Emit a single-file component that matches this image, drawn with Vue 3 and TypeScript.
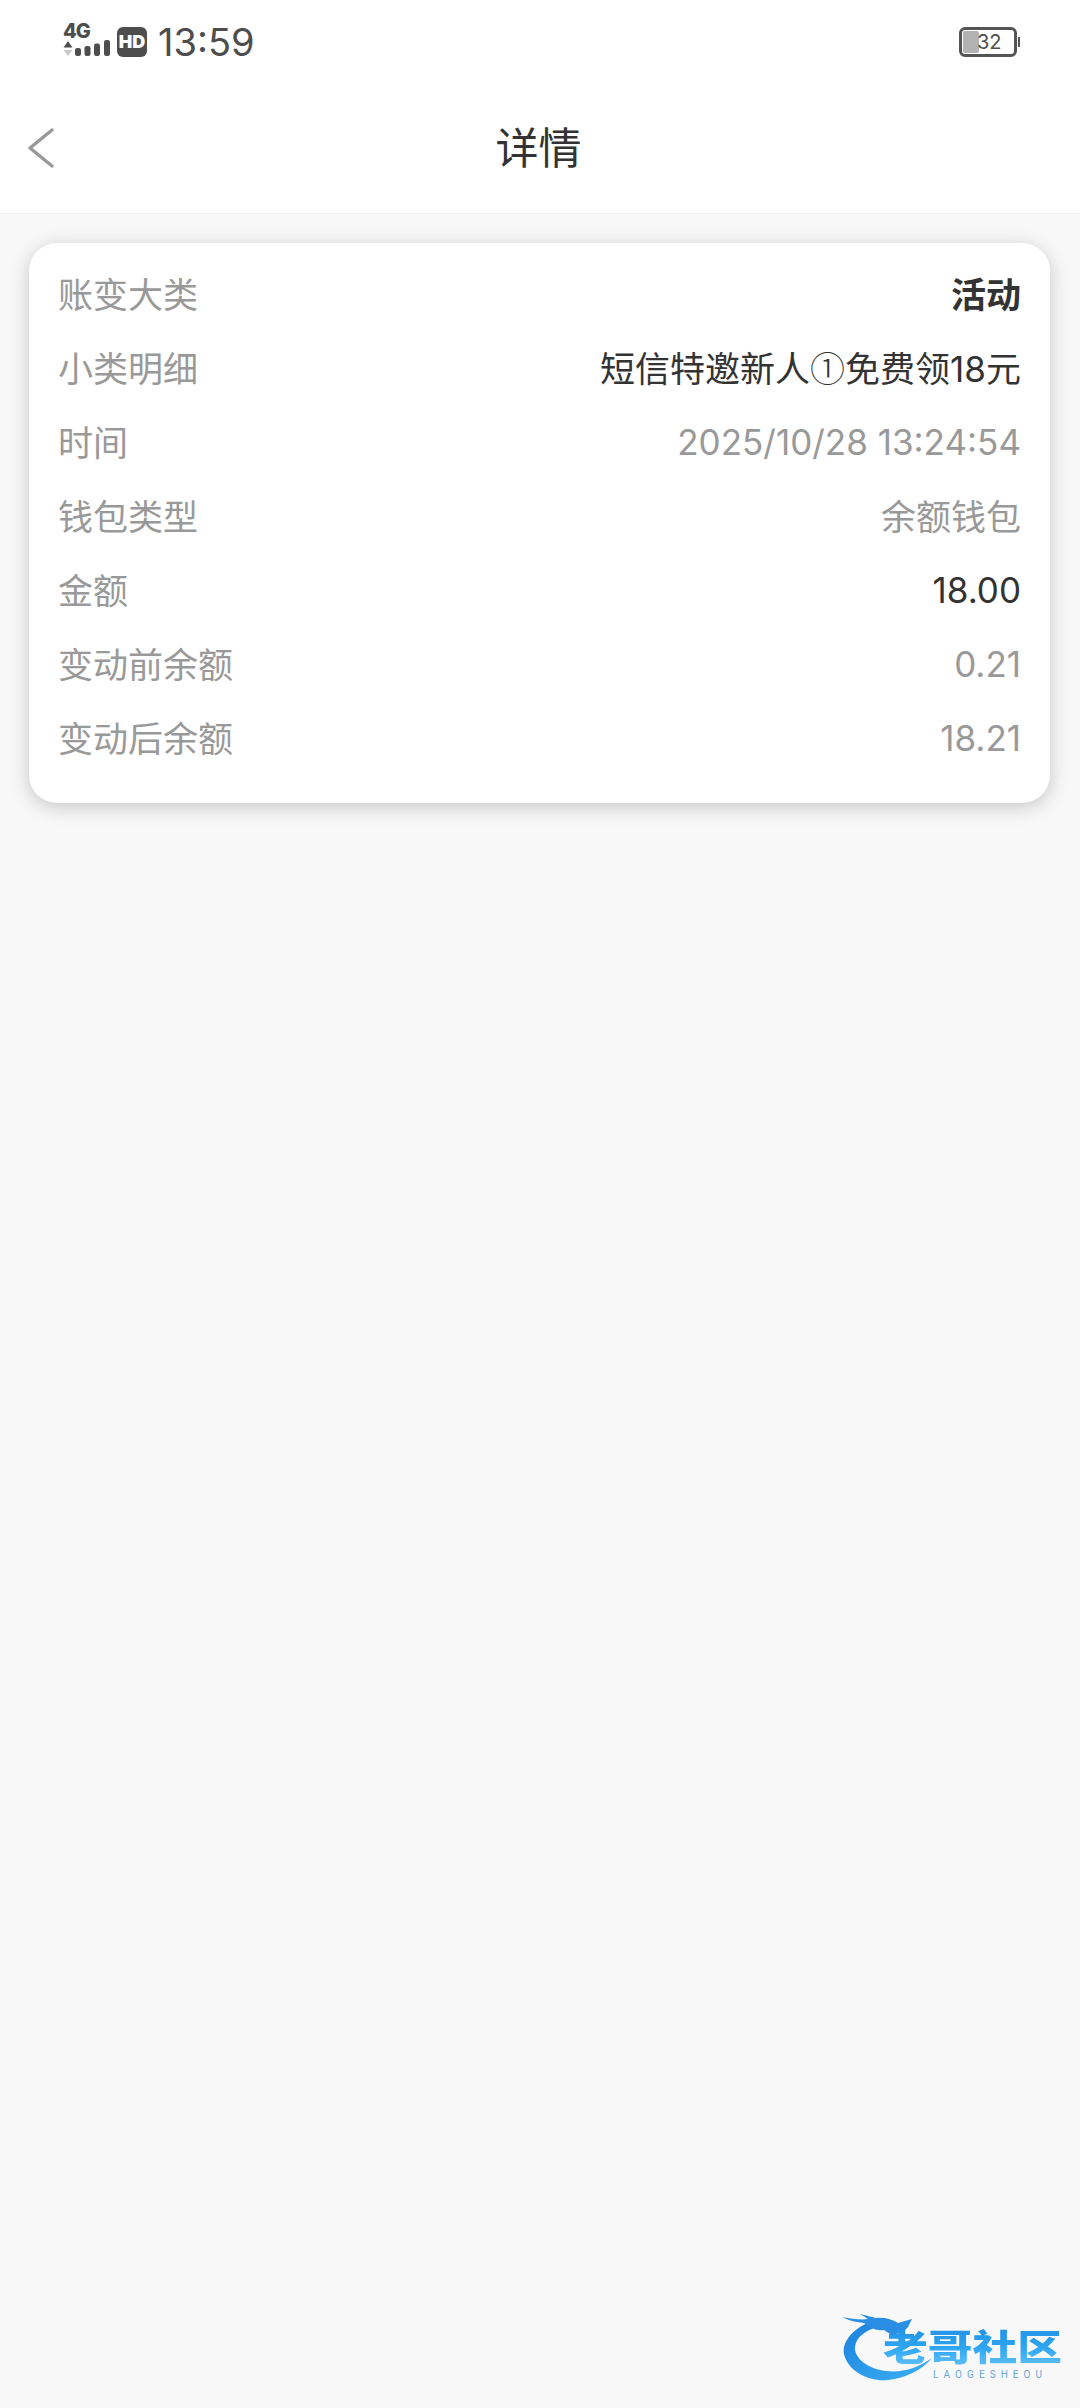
<template>
  <div class="page">
    <!-- status bar -->
    <div class="status-bar">
      <div class="status-left">
        <div class="net">
          <span class="net-label">4G</span>
          <div class="net-row">
            <svg class="arrows" width="10" height="16" viewBox="0 0 10 16">
              <path d="M5 0 L9.5 6.5 L0.5 6.5 Z" fill="#4d4d4d" />
              <path d="M5 15 L9.5 9 L0.5 9 Z" fill="#c8c8c8" />
            </svg>
            <svg class="bars" width="36" height="17" viewBox="0 0 36 17">
              <rect x="0" y="8" width="6" height="8" rx="2.2" fill="#4d4d4d" />
              <rect x="9.5" y="6" width="6" height="10" rx="2.2" fill="#4d4d4d" />
              <rect x="19" y="3.5" width="6" height="12.5" rx="2.2" fill="#4d4d4d" />
              <rect x="29" y="0" width="6" height="16" rx="2.2" fill="#4d4d4d" />
            </svg>
          </div>
        </div>
        <span class="hd">HD</span>
        <span class="time">13:59</span>
      </div>
      <div class="battery">
        <div class="battery-body">
          <div class="battery-fill" :style="{ width: battery + '%' }"></div>
          <span class="battery-num">{{ battery }}</span>
        </div>
        <div class="battery-tip"></div>
      </div>
    </div>

    <!-- title bar -->
    <div class="nav">
      <svg class="back" width="28" height="40" viewBox="0 0 28 40">
        <path d="M25 2 L3 20 L25 38" fill="none" stroke="#999" stroke-width="3.4" stroke-linecap="round" stroke-linejoin="round" />
      </svg>
      <span class="nav-title">详情</span>
    </div>

    <!-- detail card -->
    <div class="card">
      <div class="row" v-for="row in rows" :key="row.label">
        <span class="label">{{ row.label }}</span>
        <span class="value" :class="row.kind">
          <template v-if="row.circled">{{ row.value }}<span class="circled">①</span>{{ row.circled }}</template>
          <template v-else>{{ row.value }}</template>
        </span>
      </div>
    </div>

    <!-- watermark -->
    <svg class="logo" width="226" height="76" viewBox="0 0 226 76">
      <defs>
        <linearGradient id="logoText" x1="0" y1="0" x2="0" y2="1">
          <stop offset="0" stop-color="#1e88e0" />
          <stop offset="0.55" stop-color="#2ea6f2" />
          <stop offset="1" stop-color="#6cc6fa" />
        </linearGradient>
        <linearGradient id="logoDragon" x1="0" y1="0" x2="1" y2="1">
          <stop offset="0" stop-color="#1a7fdc" />
          <stop offset="1" stop-color="#3db2f6" />
        </linearGradient>
        <filter id="soft"><feGaussianBlur stdDeviation="0.7" /></filter>
      </defs>
      <g filter="url(#soft)">
        <path d="M30 12 C10 20 2 34 4 44 C8 62 30 72 48 70 C66 68 82 60 92 48 C78 58 62 63 46 61 C28 59 14 48 15 37 C16 27 26 20 38 17 Z" fill="url(#logoDragon)" />
        <path d="M2 7 C12 9 22 10 28 9 L20 4 L36 8 C44 7 52 9 58 13 L72 9 L68 17 C64 22 58 25 50 24 L44 20 C36 21 30 18 24 13 C14 12 8 10 2 7 Z" fill="#2a8fe4" />
      </g>
      <g filter="url(#soft)">
        <text class="logo-cn" x="43" y="51" fill="url(#logoText)" textLength="179" lengthAdjust="spacingAndGlyphs">老哥社区</text>
      </g>
      <text class="logo-en" x="93" y="68" textLength="109" lengthAdjust="spacing">LAOGESHEOU</text>
    </svg>
  </div>
</template>

<script setup lang="ts">
type Row = {
  label: string
  value: string
  // text after the circled number, only the sub-type row has one
  circled?: string
  kind: 'bold' | 'dark' | 'muted' | 'num' | 'num-dark'
}

const battery = 32

const rows: Row[] = [
  { label: '账变大类', value: '活动', kind: 'bold' },
  { label: '小类明细', value: '短信特邀新人', circled: '免费领18元', kind: 'dark' },
  { label: '时间', value: '2025/10/28 13:24:54', kind: 'num' },
  { label: '钱包类型', value: '余额钱包', kind: 'muted' },
  { label: '金额', value: '18.00', kind: 'num-dark' },
  { label: '变动前余额', value: '0.21', kind: 'num' },
  { label: '变动后余额', value: '18.21', kind: 'num' },
]
</script>

<style>
html, body {
  margin: 0;
  background: #f8f8f8;
}
</style>

<style scoped>
.page {
  position: relative;
  width: 1080px;
  height: 2408px;
  background: #f8f8f8;
  overflow: hidden;
  font-family: Inter, "Noto Sans CJK SC", sans-serif;
}

.status-bar {
  height: 84px;
  padding: 0 60px 0 63px;
  background: #fff;
  display: flex;
  justify-content: space-between;
  align-items: center;
  color: #4d4d4d;
}

.status-left {
  display: flex;
  align-items: center;
}

.net {
  width: 48px;
  display: flex;
  flex-direction: column;
}

.net-label {
  font-size: 20px;
  line-height: 17px;
  font-weight: 800;
  letter-spacing: -1px;
  margin-top: -4px;
}

.net-row {
  display: flex;
  align-items: flex-end;
  gap: 2px;
}

.hd {
  width: 30px;
  height: 30px;
  margin-left: 6px;
  border-radius: 6px;
  background: #4d4d4d;
  color: #fff;
  font-size: 18px;
  font-weight: 900;
  line-height: 30px;
  text-align: center;
}

.time {
  margin-left: 11px;
  font-size: 38px;
  line-height: 44px;
}

.battery {
  display: flex;
  align-items: center;
  gap: 1px;
}

.battery-body {
  position: relative;
  box-sizing: border-box;
  width: 58px;
  height: 30px;
  border: 3px solid #555;
  border-radius: 6px;
  background: #fff;
  padding: 1px;
}

.battery-fill {
  height: 100%;
  background: #b3b3b3;
  border-radius: 2px;
}

.battery-num {
  position: absolute;
  left: 15px;
  top: 0;
  font-size: 20px;
  line-height: 24px;
  color: #4d4d4d;
}

.battery-tip {
  width: 2px;
  height: 10px;
  background: #555;
}

.nav {
  position: relative;
  height: 129px;
  background: #fff;
  border-bottom: 1px solid #f0f0f0;
  display: flex;
  align-items: center;
  justify-content: center;
}

.back {
  position: absolute;
  left: 27px;
  top: 44px;
}

.nav-title {
  font-size: 43px;
  color: #333;
  line-height: 60px;
  margin: -2px 3px 0 0;
}

.card {
  box-sizing: border-box;
  width: 1021px;
  height: 560px;
  margin: 29px 0 0 29px;
  padding: 12px 29px 30px 29px;
  background: #fff;
  border-radius: 28px;
  box-shadow: 0 4px 20px rgba(0, 0, 0, 0.2);
}

.row {
  height: 74px;
  display: flex;
  justify-content: space-between;
  align-items: center;
  font-size: 35px;
}

.label {
  color: #999;
}

.circled {
  font-family: "Noto Sans CJK SC", sans-serif;
  font-weight: 300;
}

.value.bold {
  color: #333;
  font-weight: 700;
}

.value.dark {
  color: #333;
}

.value.muted {
  color: #999;
}

/* digits only: Inter sits a little high without CJK in the line */
.value.num,
.value.num-dark {
  padding-top: 4px;
  color: #999;
}

.value.num-dark {
  color: #333;
}

.logo {
  position: absolute;
  left: 840px;
  top: 2310px;
}

.logo-cn {
  font-family: "Noto Sans CJK SC", sans-serif;
  font-size: 36px;
  font-weight: 900;
}

.logo-en {
  font-family: Roboto, sans-serif;
  font-size: 10px;
  fill: #6aa8d8;
}
</style>
